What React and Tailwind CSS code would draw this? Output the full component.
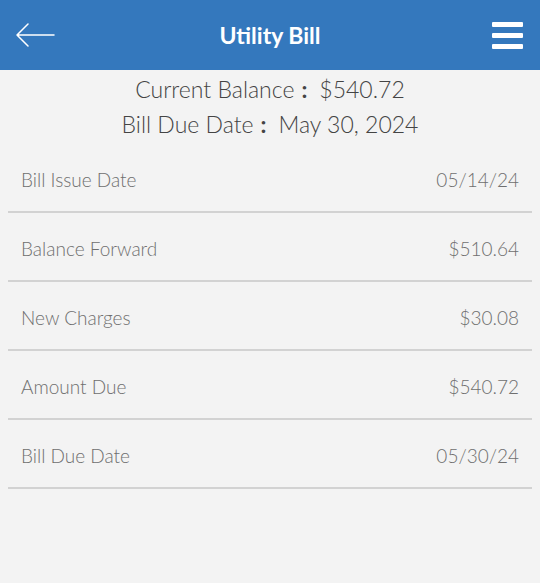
import React from "react";

const rows = [
  { label: "Bill Issue Date", value: "05/14/24" },
  { label: "Balance Forward", value: "$510.64" },
  { label: "New Charges", value: "$30.08" },
  { label: "Amount Due", value: "$540.72" },
  { label: "Bill Due Date", value: "05/30/24" },
];

const App = () => {
  return (
    <div
      className="w-[540px] h-[583px] bg-[#f3f3f3] overflow-hidden"
      style={{ fontFamily: "Lato, 'Open Sans', sans-serif" }}
    >
      <div className="h-[70px] bg-[#3478bd] grid grid-cols-[1fr_auto_1fr] items-center px-[15px]">
        <svg width="40" height="24" viewBox="0 0 40 24" fill="none">
          <path
            d="M39 12H2M13 1L2 12l11 11"
            stroke="white"
            strokeWidth="1.5"
            strokeLinecap="round"
            strokeLinejoin="round"
          />
        </svg>
        <h1 className="text-white text-[23px] font-bold">Utility Bill</h1>
        <div className="justify-self-end w-[31px] flex flex-col gap-[6px] mr-[2px]">
          <span className="h-[5px] bg-white rounded-[1px]" />
          <span className="h-[5px] bg-white rounded-[1px]" />
          <span className="h-[5px] bg-white rounded-[1px]" />
        </div>
      </div>

      <div className="pt-[2px] text-center text-[#444] text-[23px] font-light leading-[35px]">
        <p>
          Current Balance<span className="ml-[7px] mr-[12px] font-bold">:</span>$540.72
        </p>
        <p>
          Bill Due Date<span className="ml-[7px] mr-[12px] font-bold">:</span>May 30, 2024
        </p>
      </div>

      <div className="px-[8px] mt-[2px]">
        {rows.map((row) => (
          <div
            key={row.label}
            className="h-[69px] flex items-center justify-between px-[13px] pt-[6px] border-b-2 border-[#d2d2d2] text-[#6f6f6f] text-[19px] font-light"
          >
            <span>{row.label}</span>
            <span>{row.value}</span>
          </div>
        ))}
      </div>
    </div>
  );
};

export default App;
